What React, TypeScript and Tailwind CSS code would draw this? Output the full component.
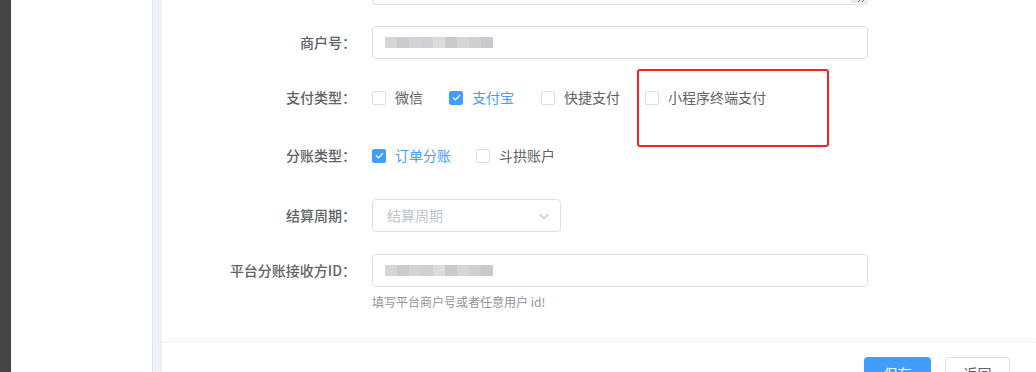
import React from "react";

const font = { fontFamily: '"Noto Sans CJK SC", "Noto Sans", sans-serif' };

function Check({ checked }: { checked?: boolean }) {
  return (
    <span
      className={
        "w-[14px] h-[14px] rounded-[2px] border flex items-center justify-center shrink-0 " +
        (checked ? "bg-[#409eff] border-[#409eff]" : "bg-white border-[#dcdfe6]")
      }
    >
      {checked && (
        <svg width="9" height="7" viewBox="0 0 9 7" fill="none">
          <path d="M1 3.5 L3.5 6 L8 1" stroke="white" strokeWidth="1.2" />
        </svg>
      )}
    </span>
  );
}

function Option({ label, checked, w }: { label: string; checked?: boolean; w: string }) {
  return (
    <div className={"flex items-center gap-[9px] " + w}>
      <Check checked={checked} />
      <span className={"text-[14px] " + (checked ? "text-[#409eff]" : "text-[#606266]")}>{label}</span>
    </div>
  );
}

function Label({ text }: { text: string }) {
  return (
    <div className="w-[198px] pr-[4px] text-right text-[14px] font-medium text-[#606266] shrink-0">
      {text}
    </div>
  );
}

function Blurred() {
  const cells = ["#d9d5d5", "#c9cbd0", "#d3d3d6", "#cfd0d3", "#dcdcde", "#c9cacd", "#d6d5d6", "#cfcfd2", "#c8c9cc"];
  return (
    <div className="flex h-[11px] blur-[0.6px]">
      {cells.map((c, i) => (
        <div key={i} className="w-[12px] h-full" style={{ background: c }} />
      ))}
    </div>
  );
}

export default function App() {
  return (
    <div className="flex w-[1036px] h-[372px] overflow-hidden bg-white" style={font}>
      <div className="w-[11px] bg-[#444444] shrink-0" />
      <div className="w-[141px] bg-white shrink-0" />
      <div className="w-[10px] bg-[#eef1f6] border-l border-[#e2e5ea] shrink-0" />
      <div className="relative flex-1 flex flex-col">
        <div className="flex shrink-0">
          <div className="w-[210px] shrink-0" />
          <div className="relative w-[496px] h-[61px] -mt-[56px] border border-[#dcdfe6] rounded-[4px]">
            <div className="absolute right-[1px] bottom-[1px] w-[15px] h-[15px] bg-[#e9e9eb] flex items-end justify-end">
              <svg width="12" height="12" viewBox="0 0 12 12">
                <path d="M11 4 L4 11 M11 8 L8 11" stroke="#777" strokeWidth="1" />
              </svg>
            </div>
          </div>
        </div>

        <div className="flex items-center mt-[21px] shrink-0">
          <Label text="商户号：" />
          <div className="ml-[12px] w-[496px] h-[33px] border border-[#dcdfe6] rounded-[4px] flex items-center pl-[12px]">
            <Blurred />
          </div>
        </div>

        <div className="flex items-center mt-[22px] h-[33px] shrink-0">
          <Label text="支付类型：" />
          <div className="ml-[12px] flex items-center">
            <Option label="微信" w="w-[77px]" />
            <Option label="支付宝" checked w="w-[92px]" />
            <Option label="快捷支付" w="w-[104px]" />
            <Option label="小程序终端支付" w="w-[140px]" />
          </div>
        </div>

        <div className="flex items-center mt-[25px] h-[33px] shrink-0">
          <Label text="分账类型：" />
          <div className="ml-[12px] flex items-center">
            <Option label="订单分账" checked w="w-[104px]" />
            <Option label="斗拱账户" w="w-[100px]" />
          </div>
        </div>

        <div className="flex items-center mt-[27px] shrink-0">
          <Label text="结算周期：" />
          <div className="ml-[12px] w-[189px] h-[33px] border border-[#dcdfe6] rounded-[4px] flex items-center justify-between pl-[14px] pr-[10px]">
            <span className="text-[14px] text-[#c0c4cc]">结算周期</span>
            <svg width="12" height="12" viewBox="0 0 12 12" fill="none">
              <path d="M1.5 4 L6 8.5 L10.5 4" stroke="#c0c4cc" strokeWidth="1.2" />
            </svg>
          </div>
        </div>

        <div className="flex items-center mt-[22px] shrink-0">
          <Label text="平台分账接收方ID：" />
          <div className="ml-[12px] w-[496px] h-[33px] border border-[#dcdfe6] rounded-[4px] flex items-center pl-[12px]">
            <Blurred />
          </div>
        </div>
        <div className="ml-[210px] mt-[7px] h-[16px] leading-[16px] text-[12px] text-[#909399] shrink-0">填写平台商户号或者任意用户 id!</div>

        <div className="mt-[32px] h-[60px] shrink-0 bg-white shadow-[0_-2px_6px_rgba(0,0,0,0.04)] border-t border-[#f3f3f3] flex justify-end items-start pt-[14px] pr-[26px] gap-[14px]">
          <button className="w-[67px] h-[32px] rounded-[4px] bg-[#409eff] text-white text-[14px]">保存</button>
          <button className="w-[65px] h-[32px] rounded-[4px] bg-white border border-[#dcdfe6] text-[#606266] text-[14px]">返回</button>
        </div>

        <div className="absolute left-[475px] top-[69px] w-[192px] h-[78px] border-2 border-[#f5221b] rounded-[3px]" />
      </div>
    </div>
  );
}
